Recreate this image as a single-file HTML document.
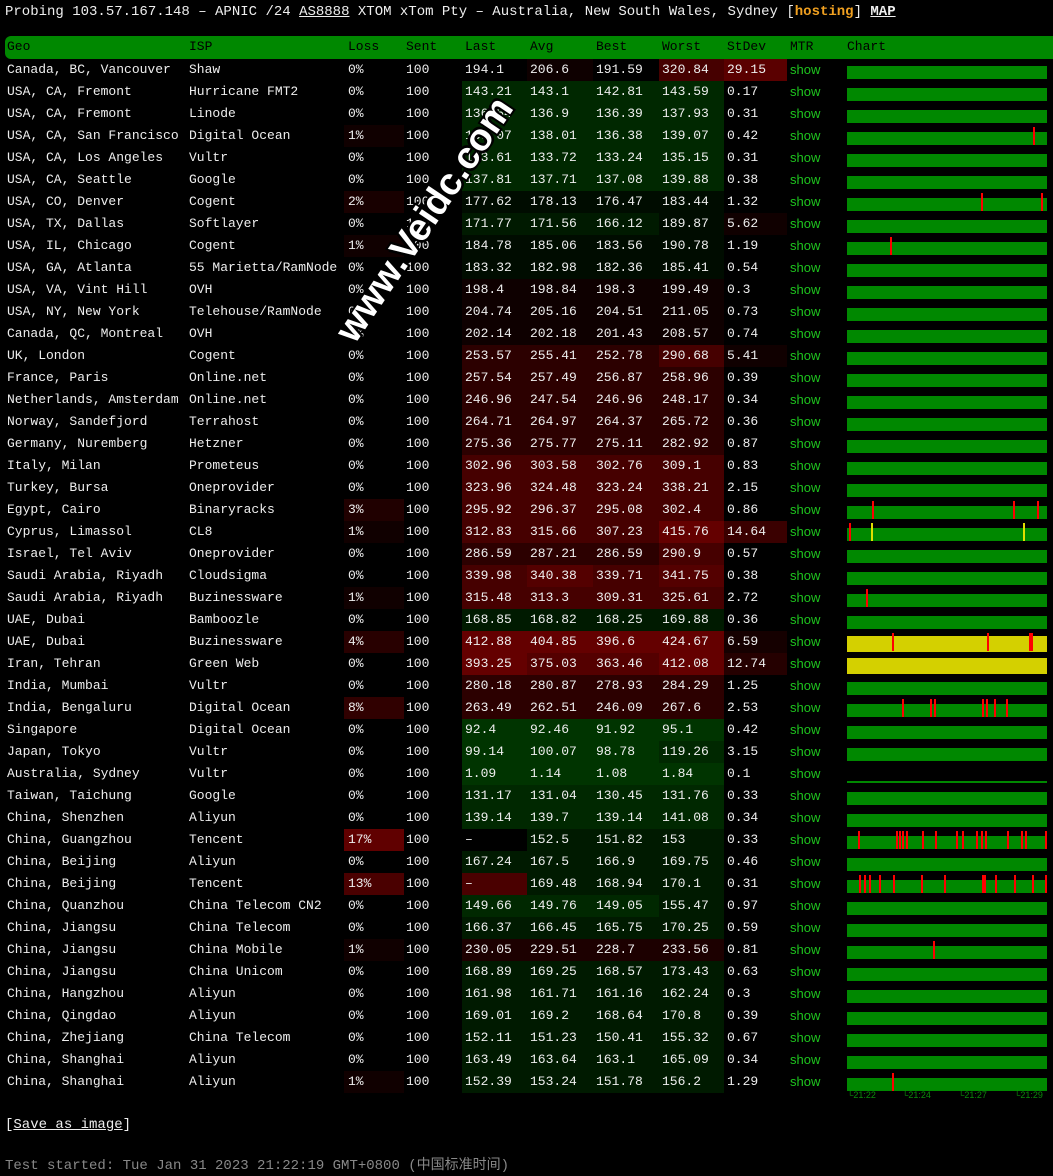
<!DOCTYPE html>
<html><head><meta charset="utf-8"><style>
body{margin:0;background:#000;color:#eee;font-family:"Liberation Mono",monospace;font-size:13px;width:1053px;height:1176px;overflow:hidden;position:relative}
.top{position:absolute;left:5px;top:2px;font-size:14px;line-height:20px;white-space:nowrap}
.top u{text-decoration:underline}
.host{color:#f0a020;font-weight:bold}
.map{font-weight:bold;text-decoration:underline}
#t{position:absolute;left:5px;top:36px;width:1048px}
.r{height:22px;line-height:22px;white-space:nowrap;position:relative}
.r>span{position:absolute;top:0;height:22px;overflow:hidden}
.h{background:#008800;color:#000;border-radius:6px 0 0 6px;height:23px;line-height:22px}
.c1{left:0;width:184px;padding-left:2px}
.c2{left:181px;width:158px;padding-left:3px}
.c3{left:339px;width:56px;padding-left:4px}
.c4{left:399px;width:56px;padding-left:2px}
.c5{left:457px;width:62px;padding-left:3px}
.c6{left:522px;width:63px;padding-left:3px}
.c7{left:588px;width:63px;padding-left:3px}
.c8{left:654px;width:62px;padding-left:3px}
.c9{left:719px;width:60px;padding-left:3px}
.c10{left:782px;width:54px;padding-left:3px;color:#1ec51e;font-family:"Liberation Sans",sans-serif;font-size:13px}
.h .c10{color:#000;font-family:"Liberation Mono",monospace;font-size:13px}
.c11{left:839px;width:209px;padding-left:3px}
.a{background:#003400}.b{background:#002800}.c{background:#001a00}.d{background:#000c00}.e{background:#0e0000}.f{background:#1c0000}.g{background:#2c0000}.hh{background:#460000}.i{background:#540000}.j{background:#640000}
.l1{background:#100000}.l2{background:#180000}.l3{background:#200000}.l4{background:#280000}.l8{background:#300000}.l13{background:#4a0000}.l17{background:#600000}
.s1{background:#5a0000}.s2{background:#3a0000}.s3{background:#250000}.s4{background:#150000}.s5{background:#100000}
.bar{position:absolute;left:3px;top:7px;width:200px;height:13px;background:#008800}
.y .bar{background:#d4d000}
.k{position:absolute;top:2px;width:2px;height:18px;background:#f00}
.ky{position:absolute;top:2px;width:2px;height:18px;background:#e0e000}
.ax{position:absolute;top:1090px;font-size:9px;color:#0a8a0a;font-family:"Liberation Sans",sans-serif}
.wm{position:absolute;left:425px;top:220px;transform:translate(-50%,-50%) rotate(-56deg);font-family:"Liberation Sans",sans-serif;font-weight:bold;font-size:38px;color:#fff;white-space:nowrap;text-shadow:-2px -2px 0 #000,2px -2px 0 #000,-2px 2px 0 #000,2px 2px 0 #000}
</style></head><body>
<div class="top">Probing 103.57.167.148 – APNIC /24 <u>AS8888</u> XTOM xTom Pty – Australia, New South Wales, Sydney [<span class="host">hosting</span>] <span class="map">MAP</span></div>
<div id="t">
<div class="r h"><span class="c1">Geo</span><span class="c2">ISP</span><span class="c3">Loss</span><span class="c4">Sent</span><span class="c5">Last</span><span class="c6">Avg</span><span class="c7">Best</span><span class="c8">Worst</span><span class="c9">StDev</span><span class="c10">MTR</span><span class="c11">Chart</span></div>
<div class="r"><span class="c1">Canada, BC, Vancouver</span><span class="c2">Shaw</span><span class="c3">0%</span><span class="c4">100</span><span class="c5">194.1</span><span class="c6 e">206.6</span><span class="c7">191.59</span><span class="c8 hh">320.84</span><span class="c9 s1">29.15</span><span class="c10">show</span><span class="c11"><i class="bar"></i></span></div>
<div class="r"><span class="c1">USA, CA, Fremont</span><span class="c2">Hurricane FMT2</span><span class="c3">0%</span><span class="c4">100</span><span class="c5 b">143.21</span><span class="c6 b">143.1</span><span class="c7 b">142.81</span><span class="c8 b">143.59</span><span class="c9">0.17</span><span class="c10">show</span><span class="c11"><i class="bar"></i></span></div>
<div class="r"><span class="c1">USA, CA, Fremont</span><span class="c2">Linode</span><span class="c3">0%</span><span class="c4">100</span><span class="c5 b">136.54</span><span class="c6 b">136.9</span><span class="c7 b">136.39</span><span class="c8 b">137.93</span><span class="c9">0.31</span><span class="c10">show</span><span class="c11"><i class="bar"></i></span></div>
<div class="r"><span class="c1">USA, CA, San Francisco</span><span class="c2">Digital Ocean</span><span class="c3 l1">1%</span><span class="c4">100</span><span class="c5 b">139.07</span><span class="c6 b">138.01</span><span class="c7 b">136.38</span><span class="c8 b">139.07</span><span class="c9">0.42</span><span class="c10">show</span><span class="c11"><i class="bar"></i><i class="k" style="left:189px"></i></span></div>
<div class="r"><span class="c1">USA, CA, Los Angeles</span><span class="c2">Vultr</span><span class="c3">0%</span><span class="c4">100</span><span class="c5 b">133.61</span><span class="c6 b">133.72</span><span class="c7 b">133.24</span><span class="c8 b">135.15</span><span class="c9">0.31</span><span class="c10">show</span><span class="c11"><i class="bar"></i></span></div>
<div class="r"><span class="c1">USA, CA, Seattle</span><span class="c2">Google</span><span class="c3">0%</span><span class="c4">100</span><span class="c5 b">137.81</span><span class="c6 b">137.71</span><span class="c7 b">137.08</span><span class="c8 b">139.88</span><span class="c9">0.38</span><span class="c10">show</span><span class="c11"><i class="bar"></i></span></div>
<div class="r"><span class="c1">USA, CO, Denver</span><span class="c2">Cogent</span><span class="c3 l2">2%</span><span class="c4">100</span><span class="c5 d">177.62</span><span class="c6 d">178.13</span><span class="c7 d">176.47</span><span class="c8 d">183.44</span><span class="c9">1.32</span><span class="c10">show</span><span class="c11"><i class="bar"></i><i class="k" style="left:137px"></i><i class="k" style="left:197px"></i></span></div>
<div class="r"><span class="c1">USA, TX, Dallas</span><span class="c2">Softlayer</span><span class="c3">0%</span><span class="c4">100</span><span class="c5 c">171.77</span><span class="c6 c">171.56</span><span class="c7 c">166.12</span><span class="c8 d">189.87</span><span class="c9 s5">5.62</span><span class="c10">show</span><span class="c11"><i class="bar"></i></span></div>
<div class="r"><span class="c1">USA, IL, Chicago</span><span class="c2">Cogent</span><span class="c3 l1">1%</span><span class="c4">100</span><span class="c5 d">184.78</span><span class="c6 d">185.06</span><span class="c7 d">183.56</span><span class="c8 d">190.78</span><span class="c9">1.19</span><span class="c10">show</span><span class="c11"><i class="bar"></i><i class="k" style="left:46px"></i></span></div>
<div class="r"><span class="c1">USA, GA, Atlanta</span><span class="c2">55 Marietta/RamNode</span><span class="c3">0%</span><span class="c4">100</span><span class="c5 d">183.32</span><span class="c6 d">182.98</span><span class="c7 d">182.36</span><span class="c8 d">185.41</span><span class="c9">0.54</span><span class="c10">show</span><span class="c11"><i class="bar"></i></span></div>
<div class="r"><span class="c1">USA, VA, Vint Hill</span><span class="c2">OVH</span><span class="c3">0%</span><span class="c4">100</span><span class="c5 e">198.4</span><span class="c6 e">198.84</span><span class="c7 e">198.3</span><span class="c8 e">199.49</span><span class="c9">0.3</span><span class="c10">show</span><span class="c11"><i class="bar"></i></span></div>
<div class="r"><span class="c1">USA, NY, New York</span><span class="c2">Telehouse/RamNode</span><span class="c3">0%</span><span class="c4">100</span><span class="c5 e">204.74</span><span class="c6 e">205.16</span><span class="c7 e">204.51</span><span class="c8 e">211.05</span><span class="c9">0.73</span><span class="c10">show</span><span class="c11"><i class="bar"></i></span></div>
<div class="r"><span class="c1">Canada, QC, Montreal</span><span class="c2">OVH</span><span class="c3">0%</span><span class="c4">100</span><span class="c5 e">202.14</span><span class="c6 e">202.18</span><span class="c7 e">201.43</span><span class="c8 e">208.57</span><span class="c9">0.74</span><span class="c10">show</span><span class="c11"><i class="bar"></i></span></div>
<div class="r"><span class="c1">UK, London</span><span class="c2">Cogent</span><span class="c3">0%</span><span class="c4">100</span><span class="c5 g">253.57</span><span class="c6 g">255.41</span><span class="c7 g">252.78</span><span class="c8 hh">290.68</span><span class="c9 s5">5.41</span><span class="c10">show</span><span class="c11"><i class="bar"></i></span></div>
<div class="r"><span class="c1">France, Paris</span><span class="c2">Online.net</span><span class="c3">0%</span><span class="c4">100</span><span class="c5 g">257.54</span><span class="c6 g">257.49</span><span class="c7 g">256.87</span><span class="c8 g">258.96</span><span class="c9">0.39</span><span class="c10">show</span><span class="c11"><i class="bar"></i></span></div>
<div class="r"><span class="c1">Netherlands, Amsterdam</span><span class="c2">Online.net</span><span class="c3">0%</span><span class="c4">100</span><span class="c5 g">246.96</span><span class="c6 g">247.54</span><span class="c7 g">246.96</span><span class="c8 g">248.17</span><span class="c9">0.34</span><span class="c10">show</span><span class="c11"><i class="bar"></i></span></div>
<div class="r"><span class="c1">Norway, Sandefjord</span><span class="c2">Terrahost</span><span class="c3">0%</span><span class="c4">100</span><span class="c5 g">264.71</span><span class="c6 g">264.97</span><span class="c7 g">264.37</span><span class="c8 g">265.72</span><span class="c9">0.36</span><span class="c10">show</span><span class="c11"><i class="bar"></i></span></div>
<div class="r"><span class="c1">Germany, Nuremberg</span><span class="c2">Hetzner</span><span class="c3">0%</span><span class="c4">100</span><span class="c5 g">275.36</span><span class="c6 g">275.77</span><span class="c7 g">275.11</span><span class="c8 g">282.92</span><span class="c9">0.87</span><span class="c10">show</span><span class="c11"><i class="bar"></i></span></div>
<div class="r"><span class="c1">Italy, Milan</span><span class="c2">Prometeus</span><span class="c3">0%</span><span class="c4">100</span><span class="c5 hh">302.96</span><span class="c6 hh">303.58</span><span class="c7 hh">302.76</span><span class="c8 hh">309.1</span><span class="c9">0.83</span><span class="c10">show</span><span class="c11"><i class="bar"></i></span></div>
<div class="r"><span class="c1">Turkey, Bursa</span><span class="c2">Oneprovider</span><span class="c3">0%</span><span class="c4">100</span><span class="c5 hh">323.96</span><span class="c6 hh">324.48</span><span class="c7 hh">323.24</span><span class="c8 hh">338.21</span><span class="c9">2.15</span><span class="c10">show</span><span class="c11"><i class="bar"></i></span></div>
<div class="r"><span class="c1">Egypt, Cairo</span><span class="c2">Binaryracks</span><span class="c3 l3">3%</span><span class="c4">100</span><span class="c5 hh">295.92</span><span class="c6 hh">296.37</span><span class="c7 hh">295.08</span><span class="c8 hh">302.4</span><span class="c9">0.86</span><span class="c10">show</span><span class="c11"><i class="bar"></i><i class="k" style="left:28px"></i><i class="k" style="left:169px"></i><i class="k" style="left:193px"></i></span></div>
<div class="r"><span class="c1">Cyprus, Limassol</span><span class="c2">CL8</span><span class="c3 l1">1%</span><span class="c4">100</span><span class="c5 hh">312.83</span><span class="c6 hh">315.66</span><span class="c7 hh">307.23</span><span class="c8 j">415.76</span><span class="c9 s2">14.64</span><span class="c10">show</span><span class="c11"><i class="bar"></i><i class="k" style="left:5px"></i><i class="ky" style="left:27px"></i><i class="ky" style="left:179px"></i></span></div>
<div class="r"><span class="c1">Israel, Tel Aviv</span><span class="c2">Oneprovider</span><span class="c3">0%</span><span class="c4">100</span><span class="c5 g">286.59</span><span class="c6 g">287.21</span><span class="c7 g">286.59</span><span class="c8 hh">290.9</span><span class="c9">0.57</span><span class="c10">show</span><span class="c11"><i class="bar"></i></span></div>
<div class="r"><span class="c1">Saudi Arabia, Riyadh</span><span class="c2">Cloudsigma</span><span class="c3">0%</span><span class="c4">100</span><span class="c5 hh">339.98</span><span class="c6 i">340.38</span><span class="c7 hh">339.71</span><span class="c8 i">341.75</span><span class="c9">0.38</span><span class="c10">show</span><span class="c11"><i class="bar"></i></span></div>
<div class="r"><span class="c1">Saudi Arabia, Riyadh</span><span class="c2">Buzinessware</span><span class="c3 l1">1%</span><span class="c4">100</span><span class="c5 hh">315.48</span><span class="c6 hh">313.3</span><span class="c7 hh">309.31</span><span class="c8 hh">325.61</span><span class="c9">2.72</span><span class="c10">show</span><span class="c11"><i class="bar"></i><i class="k" style="left:22px"></i></span></div>
<div class="r"><span class="c1">UAE, Dubai</span><span class="c2">Bamboozle</span><span class="c3">0%</span><span class="c4">100</span><span class="c5 c">168.85</span><span class="c6 c">168.82</span><span class="c7 c">168.25</span><span class="c8 c">169.88</span><span class="c9">0.36</span><span class="c10">show</span><span class="c11"><i class="bar"></i></span></div>
<div class="r y"><span class="c1">UAE, Dubai</span><span class="c2">Buzinessware</span><span class="c3 l4">4%</span><span class="c4">100</span><span class="c5 j">412.88</span><span class="c6 j">404.85</span><span class="c7 j">396.6</span><span class="c8 j">424.67</span><span class="c9 s4">6.59</span><span class="c10">show</span><span class="c11"><i class="bar" style="top:5px;height:16px"></i><i class="k" style="left:48px"></i><i class="k" style="left:143px"></i><i class="k" style="left:185px;width:4px"></i></span></div>
<div class="r y"><span class="c1">Iran, Tehran</span><span class="c2">Green Web</span><span class="c3">0%</span><span class="c4">100</span><span class="c5 j">393.25</span><span class="c6 i">375.03</span><span class="c7 i">363.46</span><span class="c8 j">412.08</span><span class="c9 s3">12.74</span><span class="c10">show</span><span class="c11"><i class="bar" style="top:5px;height:16px"></i></span></div>
<div class="r"><span class="c1">India, Mumbai</span><span class="c2">Vultr</span><span class="c3">0%</span><span class="c4">100</span><span class="c5 g">280.18</span><span class="c6 g">280.87</span><span class="c7 g">278.93</span><span class="c8 g">284.29</span><span class="c9">1.25</span><span class="c10">show</span><span class="c11"><i class="bar"></i></span></div>
<div class="r"><span class="c1">India, Bengaluru</span><span class="c2">Digital Ocean</span><span class="c3 l8">8%</span><span class="c4">100</span><span class="c5 g">263.49</span><span class="c6 g">262.51</span><span class="c7 g">246.09</span><span class="c8 g">267.6</span><span class="c9">2.53</span><span class="c10">show</span><span class="c11"><i class="bar"></i><i class="k" style="left:58px"></i><i class="k" style="left:86px"></i><i class="k" style="left:90px"></i><i class="k" style="left:138px"></i><i class="k" style="left:142px"></i><i class="k" style="left:150px"></i><i class="k" style="left:162px"></i></span></div>
<div class="r"><span class="c1">Singapore</span><span class="c2">Digital Ocean</span><span class="c3">0%</span><span class="c4">100</span><span class="c5 a">92.4</span><span class="c6 a">92.46</span><span class="c7 a">91.92</span><span class="c8 a">95.1</span><span class="c9">0.42</span><span class="c10">show</span><span class="c11"><i class="bar"></i></span></div>
<div class="r"><span class="c1">Japan, Tokyo</span><span class="c2">Vultr</span><span class="c3">0%</span><span class="c4">100</span><span class="c5 a">99.14</span><span class="c6 a">100.07</span><span class="c7 a">98.78</span><span class="c8 b">119.26</span><span class="c9">3.15</span><span class="c10">show</span><span class="c11"><i class="bar"></i></span></div>
<div class="r"><span class="c1">Australia, Sydney</span><span class="c2">Vultr</span><span class="c3">0%</span><span class="c4">100</span><span class="c5 a">1.09</span><span class="c6 a">1.14</span><span class="c7 a">1.08</span><span class="c8 a">1.84</span><span class="c9">0.1</span><span class="c10">show</span><span class="c11"><i class="bar" style="top:18px;height:2px"></i></span></div>
<div class="r"><span class="c1">Taiwan, Taichung</span><span class="c2">Google</span><span class="c3">0%</span><span class="c4">100</span><span class="c5 b">131.17</span><span class="c6 b">131.04</span><span class="c7 b">130.45</span><span class="c8 b">131.76</span><span class="c9">0.33</span><span class="c10">show</span><span class="c11"><i class="bar"></i></span></div>
<div class="r"><span class="c1">China, Shenzhen</span><span class="c2">Aliyun</span><span class="c3">0%</span><span class="c4">100</span><span class="c5 b">139.14</span><span class="c6 b">139.7</span><span class="c7 b">139.14</span><span class="c8 b">141.08</span><span class="c9">0.34</span><span class="c10">show</span><span class="c11"><i class="bar"></i></span></div>
<div class="r"><span class="c1">China, Guangzhou</span><span class="c2">Tencent</span><span class="c3 l17">17%</span><span class="c4">100</span><span class="c5">–</span><span class="c6 c">152.5</span><span class="c7 c">151.82</span><span class="c8 c">153</span><span class="c9">0.33</span><span class="c10">show</span><span class="c11"><i class="bar"></i><i class="k" style="left:14px"></i><i class="k" style="left:52px"></i><i class="k" style="left:55px"></i><i class="k" style="left:58px"></i><i class="k" style="left:62px"></i><i class="k" style="left:78px"></i><i class="k" style="left:91px"></i><i class="k" style="left:112px"></i><i class="k" style="left:118px"></i><i class="k" style="left:132px"></i><i class="k" style="left:137px"></i><i class="k" style="left:141px"></i><i class="k" style="left:163px"></i><i class="k" style="left:177px"></i><i class="k" style="left:181px"></i><i class="k" style="left:201px"></i></span></div>
<div class="r"><span class="c1">China, Beijing</span><span class="c2">Aliyun</span><span class="c3">0%</span><span class="c4">100</span><span class="c5 c">167.24</span><span class="c6 c">167.5</span><span class="c7 c">166.9</span><span class="c8 c">169.75</span><span class="c9">0.46</span><span class="c10">show</span><span class="c11"><i class="bar"></i></span></div>
<div class="r"><span class="c1">China, Beijing</span><span class="c2">Tencent</span><span class="c3 l13">13%</span><span class="c4">100</span><span class="c5 l13">–</span><span class="c6 c">169.48</span><span class="c7 c">168.94</span><span class="c8 c">170.1</span><span class="c9">0.31</span><span class="c10">show</span><span class="c11"><i class="bar"></i><i class="k" style="left:15px"></i><i class="k" style="left:20px"></i><i class="k" style="left:25px"></i><i class="k" style="left:35px"></i><i class="k" style="left:49px"></i><i class="k" style="left:77px"></i><i class="k" style="left:100px"></i><i class="k" style="left:138px"></i><i class="k" style="left:140px"></i><i class="k" style="left:151px"></i><i class="k" style="left:170px"></i><i class="k" style="left:188px"></i><i class="k" style="left:201px"></i></span></div>
<div class="r"><span class="c1">China, Quanzhou</span><span class="c2">China Telecom CN2</span><span class="c3">0%</span><span class="c4">100</span><span class="c5 b">149.66</span><span class="c6 b">149.76</span><span class="c7 b">149.05</span><span class="c8 c">155.47</span><span class="c9">0.97</span><span class="c10">show</span><span class="c11"><i class="bar"></i></span></div>
<div class="r"><span class="c1">China, Jiangsu</span><span class="c2">China Telecom</span><span class="c3">0%</span><span class="c4">100</span><span class="c5 c">166.37</span><span class="c6 c">166.45</span><span class="c7 c">165.75</span><span class="c8 c">170.25</span><span class="c9">0.59</span><span class="c10">show</span><span class="c11"><i class="bar"></i></span></div>
<div class="r"><span class="c1">China, Jiangsu</span><span class="c2">China Mobile</span><span class="c3 l1">1%</span><span class="c4">100</span><span class="c5 f">230.05</span><span class="c6 f">229.51</span><span class="c7 f">228.7</span><span class="c8 f">233.56</span><span class="c9">0.81</span><span class="c10">show</span><span class="c11"><i class="bar"></i><i class="k" style="left:89px"></i></span></div>
<div class="r"><span class="c1">China, Jiangsu</span><span class="c2">China Unicom</span><span class="c3">0%</span><span class="c4">100</span><span class="c5 c">168.89</span><span class="c6 c">169.25</span><span class="c7 c">168.57</span><span class="c8 c">173.43</span><span class="c9">0.63</span><span class="c10">show</span><span class="c11"><i class="bar"></i></span></div>
<div class="r"><span class="c1">China, Hangzhou</span><span class="c2">Aliyun</span><span class="c3">0%</span><span class="c4">100</span><span class="c5 c">161.98</span><span class="c6 c">161.71</span><span class="c7 c">161.16</span><span class="c8 c">162.24</span><span class="c9">0.3</span><span class="c10">show</span><span class="c11"><i class="bar"></i></span></div>
<div class="r"><span class="c1">China, Qingdao</span><span class="c2">Aliyun</span><span class="c3">0%</span><span class="c4">100</span><span class="c5 c">169.01</span><span class="c6 c">169.2</span><span class="c7 c">168.64</span><span class="c8 c">170.8</span><span class="c9">0.39</span><span class="c10">show</span><span class="c11"><i class="bar"></i></span></div>
<div class="r"><span class="c1">China, Zhejiang</span><span class="c2">China Telecom</span><span class="c3">0%</span><span class="c4">100</span><span class="c5 c">152.11</span><span class="c6 c">151.23</span><span class="c7 c">150.41</span><span class="c8 c">155.32</span><span class="c9">0.67</span><span class="c10">show</span><span class="c11"><i class="bar"></i></span></div>
<div class="r"><span class="c1">China, Shanghai</span><span class="c2">Aliyun</span><span class="c3">0%</span><span class="c4">100</span><span class="c5 c">163.49</span><span class="c6 c">163.64</span><span class="c7 c">163.1</span><span class="c8 c">165.09</span><span class="c9">0.34</span><span class="c10">show</span><span class="c11"><i class="bar"></i></span></div>
<div class="r"><span class="c1">China, Shanghai</span><span class="c2">Aliyun</span><span class="c3 l1">1%</span><span class="c4">100</span><span class="c5 c">152.39</span><span class="c6 c">153.24</span><span class="c7 c">151.78</span><span class="c8 c">156.2</span><span class="c9">1.29</span><span class="c10">show</span><span class="c11"><i class="bar"></i><i class="k" style="left:48px"></i></span></div>
</div>
<div class="ax" style="left:847px">└21:22</div>
<div class="ax" style="left:902px">└21:24</div>
<div class="ax" style="left:958px">└21:27</div>
<div class="ax" style="left:1014px">└21:29</div>
<div style="position:absolute;left:5px;top:1116px;line-height:18px;font-size:14px">[<u>Save as image</u>]</div>
<div style="position:absolute;left:5px;top:1157px;line-height:18px;font-size:14px;color:#888;font-family:'Liberation Mono','Noto Sans CJK SC',monospace">Test started: Tue Jan 31 2023 21:22:19 GMT+0800 (中国标准时间)</div>
<div class="wm">www.Veidc.com</div>
</body></html>
